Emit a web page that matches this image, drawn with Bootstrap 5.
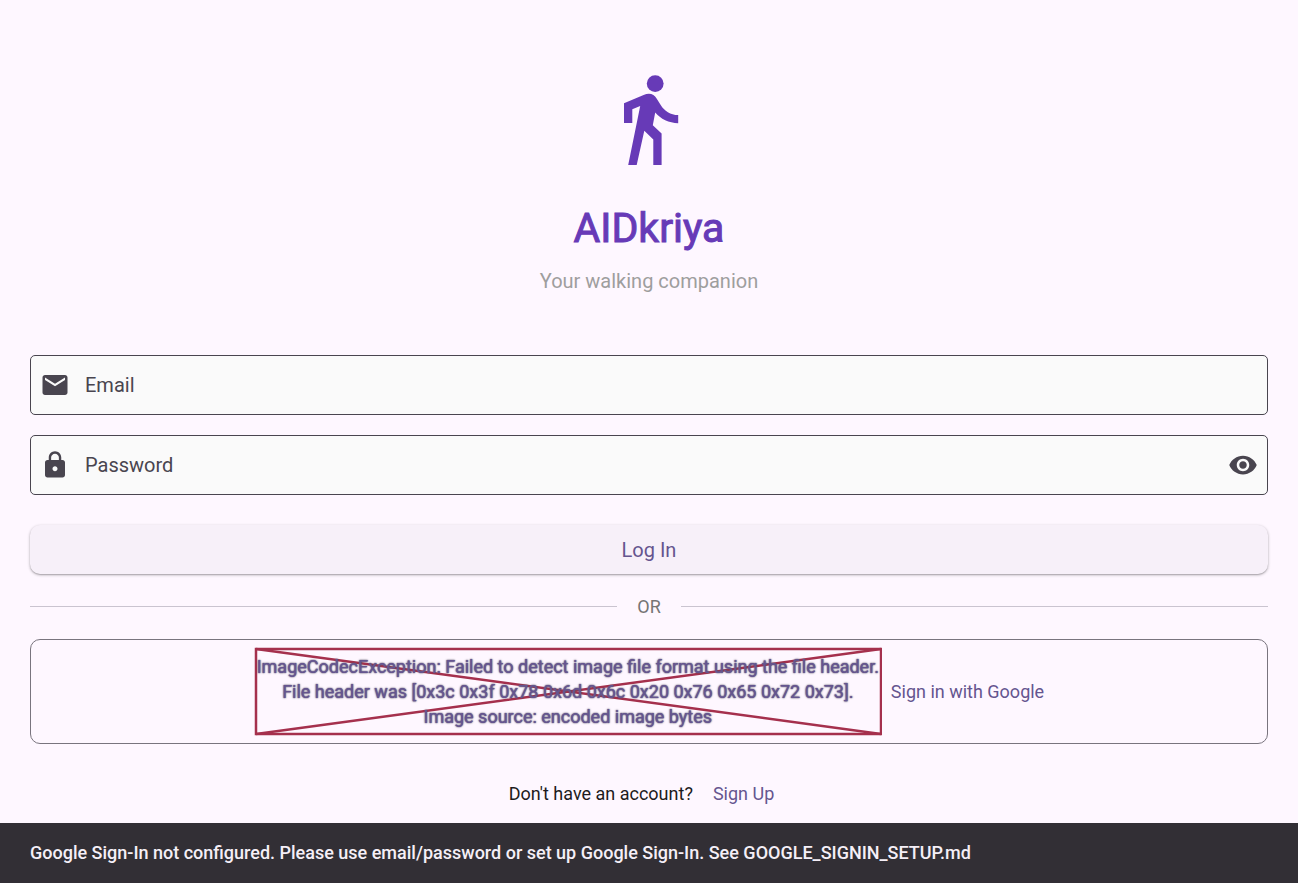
<!DOCTYPE html>
<html lang="en">
<head>
<meta charset="utf-8">
<meta name="viewport" content="width=device-width, initial-scale=1">
<title>AIDkriya - Log In</title>
<link href="https://cdn.jsdelivr.net/npm/bootstrap@5.3.0/dist/css/bootstrap.min.css" rel="stylesheet">
<style>
  body { background: #fef7ff; color: #1d1b20; font-family: Roboto, "Liberation Sans", sans-serif; font-size: 18px; line-height: 25px; }
  .page-pad { padding: 70px 30px 14px; }
  .brand-color { color: #673ab7; }
  .brand-title { font-size: 41px; line-height: 50px; font-weight: 400; margin-top: 33px; -webkit-text-stroke: 1px #673ab7; }
  .tagline { font-size: 20px; line-height: 30px; color: #9e9e9e; margin: 13px 0 59px; }
  .field-stack { gap: 20px; }
  .field { height: 60px; background: #fafafa; border: 1px solid #49454f; border-radius: 5px; color: #49454f; padding: 0 9px; }
  .field:focus-within { border-color: #65558f; }
  .field label { font-size: 20px; line-height: 30px; padding: 0 15px; }
  .field .form-control { font-size: 20px; line-height: 30px; color: #1d1b20; padding: 0 15px 0 0; }
  .login-btn { height: 49px; margin-top: 30px; background: #f7f0f9; color: #65558f; font-size: 20px; border: 0; border-radius: 10px; box-shadow: 0 1px 3px rgba(0,0,0,.3), 0 1px 1px rgba(0,0,0,.12); }
  .login-btn:hover { background: #f0e8f5; color: #65558f; }
  .or-row { margin: 20px 0; color: #757575; gap: 20px; }
  .or-row hr { margin: 0; border-color: #cac4d0; opacity: 1; }
  .google-btn { min-height: 105px; border: 1px solid #79747e; border-radius: 10px; color: #65558f; font-size: 18px; line-height: 25px; padding: 7px; gap: 9px; }
  .google-btn:hover { background: #f7f0f9; border-color: #79747e; color: #65558f; }
  .broken-image { width: 628px; max-width: 100%; padding: 7px 0; text-shadow: 0 0 1px #65558f, 0 0 2px #555; }
  .broken-image svg { z-index: -1; }
  .signup-row { margin-top: 37px; gap: 20px; padding-right: 15px; }
  .signup-row a { color: #65558f; }
  .snack { background: #322f35; color: #f5eff7; font-weight: 500; padding: 17px 30px 18px; }
</style>
</head>
<body>
<div class="d-flex flex-column min-vh-100">
  <main class="page-pad flex-grow-1">
    <header class="text-center">
      <svg class="d-block mx-auto brand-color" width="100" height="100" viewBox="0 0 100 100" fill="currentColor" aria-hidden="true">
        <circle cx="56.2" cy="13.6" r="8.4"/>
        <path d="M25 53V33.3L44.6 25C50 22.500 55 23.600 57.600 28.500L61.700 35C65.300 41 71.500 45.100 79.200 45.100V53.200C70 53.200 61.500 49 56.200 42.600L53.800 55.200 62.600 63.400V95H54.300V69.400L45.300 60.800 37.700 95H29.200L41.200 36 33.300 39.200V53Z"/>
      </svg>
      <h1 class="brand-title brand-color mb-0">AIDkriya</h1>
      <p class="tagline">Your walking companion</p>
    </header>
    <form>
      <div class="field-stack d-flex flex-column">
        <div class="field d-flex align-items-center">
          <svg width="30" height="30" viewBox="0 0 24 24" fill="currentColor" class="flex-shrink-0" aria-hidden="true"><path d="M20 4H4c-1.100 0-1.990.900-1.990 2L2 18c0 1.100.900 2 2 2h16c1.100 0 2-.900 2-2V6c0-1.100-.900-2-2-2zm0 4l-8 5-8-5V6l8 5 8-5v2z"/></svg>
          <label for="email">Email</label>
          <input id="email" type="email" class="form-control border-0 bg-transparent shadow-none">
        </div>
        <div class="field d-flex align-items-center">
          <svg width="30" height="30" viewBox="0 0 24 24" fill="currentColor" class="flex-shrink-0" aria-hidden="true"><path d="M18 8h-1V6c0-2.760-2.240-5-5-5S7 3.240 7 6v2H6c-1.100 0-2 .900-2 2v10c0 1.100.900 2 2 2h12c1.100 0 2-.900 2-2V10c0-1.100-.900-2-2-2zm-6 9c-1.100 0-2-.900-2-2s.900-2 2-2 2 .900 2 2-.900 2-2 2zm3.100-9H8.900V6c0-1.710 1.390-3.100 3.100-3.100 1.710 0 3.100 1.390 3.100 3.100v2z"/></svg>
          <label for="password">Password</label>
          <input id="password" type="password" class="form-control border-0 bg-transparent shadow-none">
          <button type="button" class="btn p-0 border-0 text-reset d-flex" aria-label="Show password">
            <svg width="30" height="30" viewBox="0 0 24 24" fill="currentColor" aria-hidden="true"><path d="M12 4.500C7 4.500 2.730 7.610 1 12c1.730 4.390 6 7.500 11 7.500s9.270-3.110 11-7.500c-1.730-4.390-6-7.500-11-7.500zM12 17c-2.760 0-5-2.240-5-5s2.240-5 5-5 5 2.240 5 5-2.240 5-5 5zm0-8c-1.660 0-3 1.340-3 3s1.340 3 3 3 3-1.340 3-3-1.340-3-3-3z"/></svg>
          </button>
        </div>
      </div>
      <button type="submit" class="btn login-btn w-100">Log In</button>
      <div class="or-row d-flex align-items-center">
        <hr class="flex-grow-1"><span>OR</span><hr class="flex-grow-1">
      </div>
      <button type="button" class="btn google-btn w-100 d-flex align-items-center justify-content-center">
        <span class="broken-image position-relative z-0 d-block">
          <svg class="position-absolute top-0 start-0 w-100 h-100" viewBox="0 0 628 89" preserveAspectRatio="none" fill="none" stroke="#a5304d" aria-hidden="true">
            <rect x="2" y="2" width="625" height="85" stroke-width="2.500"/>
            <path d="M2 2L627 87M2 87L627 2" stroke-width="2.500"/>
          </svg>
          ImageCodecException: Failed to detect image file format using the file header.<br>File header was [0x3c 0x3f 0x78 0x6d 0x6c 0x20 0x76 0x65 0x72 0x73].<br>Image source: encoded image bytes
        </span>
        <span>Sign in with Google</span>
      </button>
    </form>
    <div class="signup-row d-flex justify-content-center flex-wrap">
      <span>Don't have an account?</span><a href="#" class="text-decoration-none">Sign Up</a>
    </div>
  </main>
  <div class="snack" role="status">Google Sign-In not configured. Please use email/password or set up Google Sign-In. See GOOGLE_SIGNIN_SETUP.md</div>
</div>
<script src="https://cdn.jsdelivr.net/npm/bootstrap@5.3.0/dist/js/bootstrap.bundle.min.js"></script>
</body>
</html>
